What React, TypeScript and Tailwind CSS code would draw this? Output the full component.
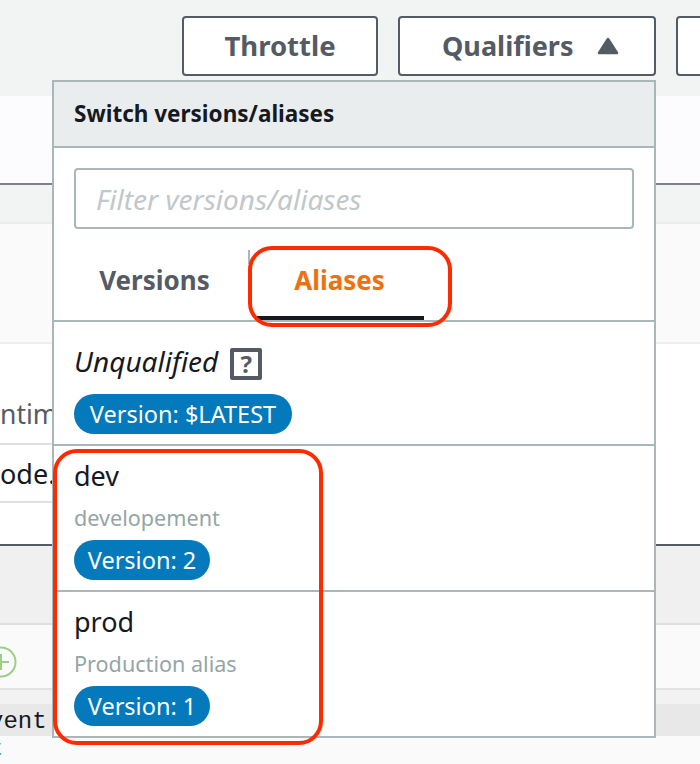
import React from 'react';

const font = { fontFamily: '"Noto Sans", sans-serif' };
const mono = { fontFamily: '"Liberation Mono", monospace' };

const VersionPill: React.FC<{ label: string; width: string }> = ({ label, width }) => (
  <div className={`h-10 rounded-[20px] bg-[#0479bb] text-white text-[23.5px] leading-10 text-center ${width}`}>{label}</div>
);

const App: React.FC = () => {
  return (
    <div className="relative w-[700px] h-[764px] overflow-hidden bg-[#fafafa]" style={font}>
      {/* page behind the menu */}
      <div className="h-24 bg-[#f2f3f3] flex items-start gap-5 pt-4 pl-[182px] w-[780px]">
        <button className="w-[196px] h-[60px] shrink-0 rounded-[4px] border-2 border-[#545b64] bg-white text-[#545b64] text-[27.5px] font-bold">Throttle</button>
        <button className="w-[258px] h-[60px] shrink-0 rounded-[4px] border-2 border-[#545b64] bg-white text-[#545b64] text-[27px] font-bold flex items-center pl-[42px] gap-6">
          Qualifiers
          <svg width="22" height="18" viewBox="0 0 22 18"><path d="M11 2 20 16H2Z" fill="#545b64" stroke="#545b64" strokeWidth="2.5" strokeLinejoin="round" /></svg>
        </button>
        <div className="w-[100px] h-[60px] shrink-0 rounded-[4px] border-2 border-[#545b64] bg-white" />
      </div>
      <div className="h-[89px] bg-[#fcfbfd] border-b-2 border-[#7d8289]" />
      <div className="h-[39px] bg-[#f2f3f3] border-b-2 border-[#eaeded]" />
      <div className="h-[120px] bg-[#fafafa] border-b-2 border-[#eeeeee]" />
      <div className="h-[200px] bg-white text-[27px] text-[#545b64]">
        <div className="w-[53px] h-[101px] border-b-2 border-[#e0e0e0] flex items-center pt-[42px]">
          <span className="leading-none text-[26.5px]">ntim</span>
        </div>
        <div className="w-[53px] h-[58px] border-b-2 border-[#e0e0e0] flex items-center text-[#16191f]">
          <span className="leading-none">ode.</span>
        </div>
      </div>
      <div className="h-[81px] bg-[#f0f0f0] border-t-2 border-[#545b64] border-b-2 border-b-[#dfdfdf]" />
      <div className="h-[65px] bg-[#fafafa] border-b-2 border-[#e2e2e2] flex items-center pt-[10px]">
        <svg width="34" height="34" viewBox="0 0 34 34" className="-ml-4 shrink-0">
          <circle cx="17" cy="17" r="14.5" fill="none" stroke="#9ccf86" strokeWidth="2" />
          <path d="M17 9v16M9 17h16" stroke="#9ccf86" strokeWidth="2" />
        </svg>
      </div>
      <div className="h-[14px] bg-[#f2f2f2]" />
      <div className="h-8 bg-[#e8e8e8] text-[24px] leading-[35px] text-[#16191f] -ml-[11px]" style={mono}>vent</div>
      <div className="h-7 text-[22px] leading-7 text-[#3a8f6a] -ml-[10px]" style={mono}>t</div>

      {/* qualifiers menu */}
      <div className="absolute left-[52px] top-[80px] w-[604px] h-[658px] border-2 border-[#aab7b8] bg-white flex flex-col">
        <div className="h-[66px] shrink-0 bg-[#eaeded] border-b-2 border-[#aab7b8] pl-5 flex items-center text-[22.5px] font-bold text-[#16191f]">
          Switch versions/aliases
        </div>
        <div className="px-5 pt-5">
          <input
            readOnly
            placeholder="Filter versions/aliases"
            className="w-full h-[61px] rounded-[4px] border-2 border-[#aab7b8] px-5 text-[28px] italic placeholder:text-[#c0c8c9] outline-none"
          />
        </div>
        <div className="h-[93px] shrink-0 border-b-2 border-[#aab7b8] flex items-stretch">
          <div className="w-[201px] shrink-0 flex items-center justify-center pt-3 text-[26px] font-bold text-[#545b64]">Versions</div>
          <div className="w-[169px] shrink-0 flex items-center justify-center pt-4 text-[26px] font-bold text-[#ec7211] border-b-4 border-[#16191f]">Aliases</div>
        </div>
        <div className="h-[124px] shrink-0 border-b-2 border-[#aab7b8] pl-5 pt-[22px]">
          <div className="flex items-center gap-3 h-10">
            <span className="text-[28px] italic text-[#16191f] leading-none pb-[6px]">Unqualified</span>
            <span className="w-8 h-8 rounded-[2px] border-[4px] border-[#545b64] flex items-center justify-center text-[24px] font-bold text-[#545b64] leading-none">?</span>
          </div>
          <div className="mt-[10px]"><VersionPill label="Version: $LATEST" width="w-[218px]" /></div>
        </div>
        <div className="h-[146px] shrink-0 border-b-2 border-[#aab7b8] pl-5 pt-3">
          <div className="text-[27px] leading-9 text-[#16191f]">dev</div>
          <div className="text-[21.6px] leading-8 mt-2 text-[#95a5a6]">developement</div>
          <div className="mt-[6px]"><VersionPill label="Version: 2" width="w-[136px]" /></div>
        </div>
        <div className="pl-5 pt-3">
          <div className="text-[27px] leading-9 text-[#16191f]">prod</div>
          <div className="text-[21.6px] leading-8 mt-2 text-[#95a5a6]">Production alias</div>
          <div className="mt-[6px]"><VersionPill label="Version: 1" width="w-[136px]" /></div>
        </div>
      </div>

      {/* tab separator peeking out behind the annotation */}
      <div className="absolute left-[248px] top-[250px] w-[2px] h-[14px] bg-[#aab7b8]" />

      {/* red annotation boxes */}
      <div className="absolute left-[248px] top-[246px] w-[204px] h-[81px] rounded-[24px] border-4 border-[#ff2a00]" />
      <div className="absolute left-[53px] top-[449px] w-[270px] h-[296px] rounded-[24px] border-4 border-[#ff2a00]" />
    </div>
  );
};

export default App;
